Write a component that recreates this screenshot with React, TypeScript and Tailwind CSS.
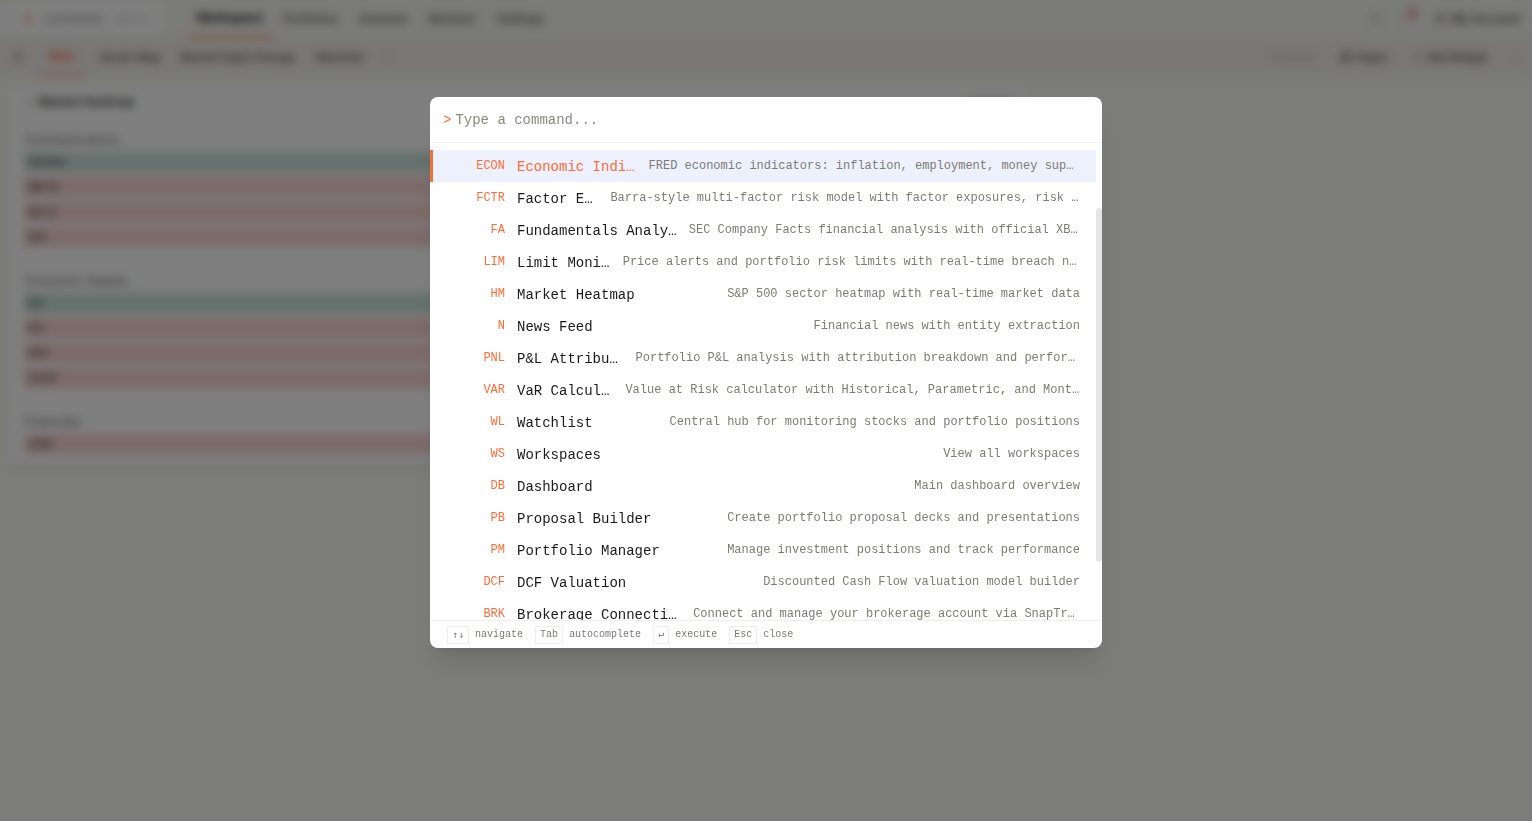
import React from 'react';
import { Bell, GripVertical, LayoutGrid, Menu, MoreVertical, Plus, Search, User } from 'lucide-react';
import clsx from 'clsx';

interface Command {
  code: string;
  title: string;
  description: string;
}

interface HeatGroup {
  name: string;
  rows: { symbol: string; up: boolean }[];
}

const COMMANDS: Command[] = [
  { code: 'ECON', title: 'Economic Indicators', description: 'FRED economic indicators: inflation, employment, money supply, and yield spreads' },
  { code: 'FCTR', title: 'Factor Exposure', description: 'Barra-style multi-factor risk model with factor exposures, risk decomposition, and return attribution' },
  { code: 'FA', title: 'Fundamentals Analysis', description: 'SEC Company Facts financial analysis with official XBRL data' },
  { code: 'LIM', title: 'Limit Monitor', description: 'Price alerts and portfolio risk limits with real-time breach notifications' },
  { code: 'HM', title: 'Market Heatmap', description: 'S&P 500 sector heatmap with real-time market data' },
  { code: 'N', title: 'News Feed', description: 'Financial news with entity extraction' },
  { code: 'PNL', title: 'P&L Attribution', description: 'Portfolio P&L analysis with attribution breakdown and performance metrics' },
  { code: 'VAR', title: 'VaR Calculator', description: 'Value at Risk calculator with Historical, Parametric, and Monte Carlo methods' },
  { code: 'WL', title: 'Watchlist', description: 'Central hub for monitoring stocks and portfolio positions' },
  { code: 'WS', title: 'Workspaces', description: 'View all workspaces' },
  { code: 'DB', title: 'Dashboard', description: 'Main dashboard overview' },
  { code: 'PB', title: 'Proposal Builder', description: 'Create portfolio proposal decks and presentations' },
  { code: 'PM', title: 'Portfolio Manager', description: 'Manage investment positions and track performance' },
  { code: 'DCF', title: 'DCF Valuation', description: 'Discounted Cash Flow valuation model builder' },
  { code: 'BRK', title: 'Brokerage Connection', description: 'Connect and manage your brokerage account via SnapTrade' },
];

const HINTS = [
  { keys: '↑↓', label: 'navigate' },
  { keys: 'Tab', label: 'autocomplete' },
  { keys: '↵', label: 'execute' },
  { keys: 'Esc', label: 'close' },
];

const GROUPS: HeatGroup[] = [
  {
    name: 'Communications',
    rows: [
      { symbol: 'GOOGL', up: true },
      { symbol: 'META', up: false },
      { symbol: 'NFLX', up: false },
      { symbol: 'DIS', up: false },
    ],
  },
  {
    name: 'Consumer Staples',
    rows: [
      { symbol: 'KO', up: true },
      { symbol: 'PG', up: false },
      { symbol: 'PEP', up: false },
      { symbol: 'COST', up: false },
    ],
  },
  { name: 'Financials', rows: [{ symbol: 'JPM', up: false }] },
];

const TopNav: React.FC = () => (
  <header className="flex h-[38px] items-center justify-between bg-[#f6f6f2] pr-3">
    <div className="flex h-full items-center">
      <div className="flex h-8 w-[164px] items-center gap-3 bg-white pl-6 text-[11px] text-[#888]">
        <span className="h-2 w-2 rounded-full bg-[#ffb0a4]" />
        <span>Commands</span>
        <span className="text-[#bbb]">Ctrl+K</span>
      </div>
      <nav className="ml-6 flex h-full text-xs font-medium text-[#555]">
        <a href="#" className="flex w-[84px] items-center justify-center border-b-2 border-[#ff6b35] font-bold text-[#111]">
          Workspace
        </a>
        <a href="#" className="flex w-[76px] items-center justify-center">Portfolios</a>
        <a href="#" className="flex w-[70px] items-center justify-center">Analysis</a>
        <a href="#" className="flex w-[67px] items-center justify-center">Markets</a>
        <a href="#" className="flex w-[70px] items-center justify-center">Settings</a>
      </nav>
    </div>
    <div className="flex items-center gap-5 text-xs font-medium text-[#444]">
      <Search size={12} className="text-[#888]" />
      <span className="relative">
        <Bell size={12} className="text-[#bbb]" />
        <span className="absolute -top-1 left-2 h-2 w-2 rounded-full bg-[#ef7a72]" />
      </span>
      <span className="flex items-center gap-1">
        <User size={14} />
        My Account
      </span>
    </div>
  </header>
);

const TabBar: React.FC = () => (
  <div className="flex h-[38px] items-center justify-between bg-[#f2f0ec] px-3 text-[11px] font-medium text-[#444]">
    <div className="flex h-full items-center">
      <Menu size={12} />
      <a href="#" className="ml-4 flex h-full w-[44px] items-center justify-center border-b-2 border-[#ff8a5c] font-bold text-[#ff6b35]">
        Main
      </a>
      <a href="#" className="ml-4">Sector Map</a>
      <a href="#" className="ml-5">Market Depth Change</a>
      <a href="#" className="ml-5">Watchlist</a>
      <Plus size={8} className="ml-5 text-[#aaa]" />
    </div>
    <div className="flex items-center gap-6">
      <span className="text-[#c4bfa0]">Unsaved</span>
      <span className="flex items-center gap-1"><LayoutGrid size={12} /> Pages</span>
      <span className="flex items-center gap-1"><Plus size={10} /> Add Widget</span>
      <MoreVertical size={8} className="text-[#999]" />
    </div>
  </div>
);

const HeatmapCard: React.FC = () => (
  <section className="mx-2 mt-3 w-2/3 rounded-sm bg-white px-4 pt-1 pb-3 shadow-md">
    <div className="mb-4 flex h-5 items-center justify-between text-xs font-semibold text-[#333]">
      <h2 className="flex items-center gap-1">
        <GripVertical size={10} className="text-[#999]" />
        Market Heatmap
      </h2>
      <span className="font-normal text-[#888]">Updated</span>
    </div>
    {GROUPS.map((group) => (
      <div key={group.name} className="mb-[22px] last:mb-0">
        <h3 className="h-6 text-xs leading-6 text-[#666]">{group.name}</h3>
        <ul className="flex flex-col gap-[5px]">
          {group.rows.map((row) => (
            <li
              key={row.symbol}
              className={clsx(
                'flex h-5 items-center px-1 text-[11px] font-medium text-[#444]',
                row.up ? 'bg-[#cbe3db]' : 'bg-[#f8d5d2]',
              )}
            >
              {row.symbol}
            </li>
          ))}
        </ul>
      </div>
    ))}
  </section>
);

const CommandRow: React.FC<{ command: Command; active: boolean }> = ({ command, active }) => (
  <li>
    <button
      type="button"
      className={clsx(
        'flex h-8 w-full items-center gap-3 border-l-[3px] pr-4 text-left',
        active ? 'border-[#f0703f] bg-[#edf1fd]' : 'border-transparent',
      )}
    >
      <span className="w-[72px] shrink-0 text-right text-xs text-[#ff6b35]">{command.code}</span>
      <span className={clsx('mt-px min-w-0 truncate text-sm', active ? 'text-[#ff6b35]' : 'text-[#1a1a1a]')}>
        {command.title}
      </span>
      <span className="ml-auto min-w-0 truncate text-xs text-[#7c7c74]">{command.description}</span>
    </button>
  </li>
);

const CommandPalette: React.FC = () => (
  <div className="fixed inset-0 flex items-start justify-center bg-black/50 pt-[97px] backdrop-blur-[5px]">
    <div
      role="dialog"
      aria-label="Command palette"
      className="w-full max-w-2xl overflow-hidden rounded-lg bg-white font-['Liberation_Mono',monospace] shadow-xl"
    >
      <label className="flex h-[46px] items-center gap-1 border-b border-[#f3f3f1] px-[13px] text-sm text-[#ff6b35]">
        <span>&gt;</span>
        <input
          type="text"
          aria-label="Command"
          placeholder="Type a command..."
          className="min-w-0 flex-1 bg-transparent text-[#1a1a1a] outline-none placeholder:text-[#8a8a80]"
        />
      </label>
      <div className="flex h-[477px]">
        <ul className="min-w-0 flex-1 overflow-hidden pt-[7px]">
          {COMMANDS.map((command, index) => (
            <CommandRow key={command.code} command={command} active={index === 0} />
          ))}
        </ul>
        <div className="w-[6px] pt-[65px]">
          <div className="h-[354px] rounded-full bg-[#e5e5e5]" />
        </div>
      </div>
      <footer className="flex h-7 items-center gap-3 border-t border-[#eeeeec] px-[17px] text-[10px] text-[#7c7c74]">
        {HINTS.map((hint) => (
          <span key={hint.label} className="flex items-center gap-[6px]">
            <kbd
              className={clsx(
                'flex h-[18px] items-center border border-[#eeeeec] px-1',
                hint.keys === '↑↓' ? "font-['DejaVu_Sans_Mono',monospace]" : "font-['Liberation_Mono',monospace]",
              )}
            >
              {hint.keys}
            </kbd>
            {hint.label}
          </span>
        ))}
      </footer>
    </div>
  </div>
);

export default function App() {
  return (
    <div className="min-h-screen bg-[#f8f8f4] font-['Inter',sans-serif]">
      <TopNav />
      <TabBar />
      <HeatmapCard />
      <CommandPalette />
    </div>
  );
}
